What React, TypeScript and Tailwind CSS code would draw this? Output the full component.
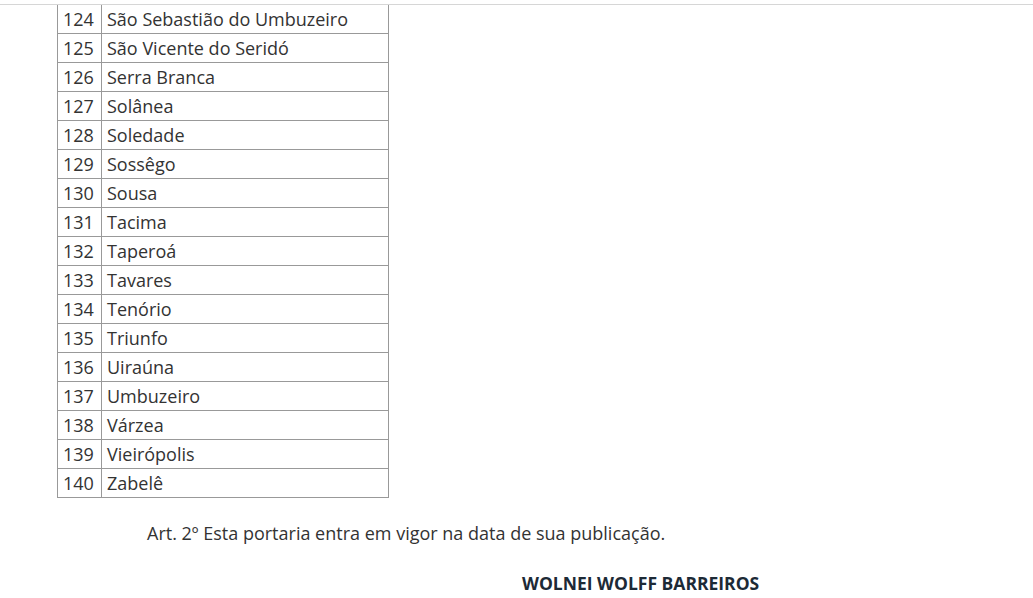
const rows: [number, string][] = [
  [124, "São Sebastião do Umbuzeiro"],
  [125, "São Vicente do Seridó"],
  [126, "Serra Branca"],
  [127, "Solânea"],
  [128, "Soledade"],
  [129, "Sossêgo"],
  [130, "Sousa"],
  [131, "Tacima"],
  [132, "Taperoá"],
  [133, "Tavares"],
  [134, "Tenório"],
  [135, "Triunfo"],
  [136, "Uiraúna"],
  [137, "Umbuzeiro"],
  [138, "Várzea"],
  [139, "Vieirópolis"],
  [140, "Zabelê"],
];

const App = () => {
  return (
    <div className="w-[1033px] h-[598px] overflow-hidden bg-white text-[#333] font-['Open_Sans',sans-serif]">
      <div className="h-[5px] border-b border-[#d6d6d6]" />
      <div className="pl-[57px]">
        <table className="border-collapse text-[18px] leading-none">
          <tbody>
            {rows.map(([n, name], i) => (
              <tr key={n} className={i === 0 ? "h-[28px]" : "h-[29px]"}>
                <td
                  className={`w-[44px] px-[5px] border-x border-b border-[#999] ${
                    i === 0 ? "border-t-0" : "border-t"
                  }`}
                >
                  {n}
                </td>
                <td
                  className={`w-[287px] px-[5px] border-x border-b border-[#999] ${
                    i === 0 ? "border-t-0" : "border-t"
                  }`}
                >
                  {name}
                </td>
              </tr>
            ))}
          </tbody>
        </table>
        <p className="mt-[23px] ml-[90px] text-[18px] leading-[24px]">
          Art. 2º Esta portaria entra em vigor na data de sua publicação.
        </p>
        <p className="mt-[26px] ml-[465px] text-[17.5px] leading-[24px] font-bold text-[#1d2a36]">
          WOLNEI WOLFF BARREIROS
        </p>
      </div>
    </div>
  );
};

export default App;
